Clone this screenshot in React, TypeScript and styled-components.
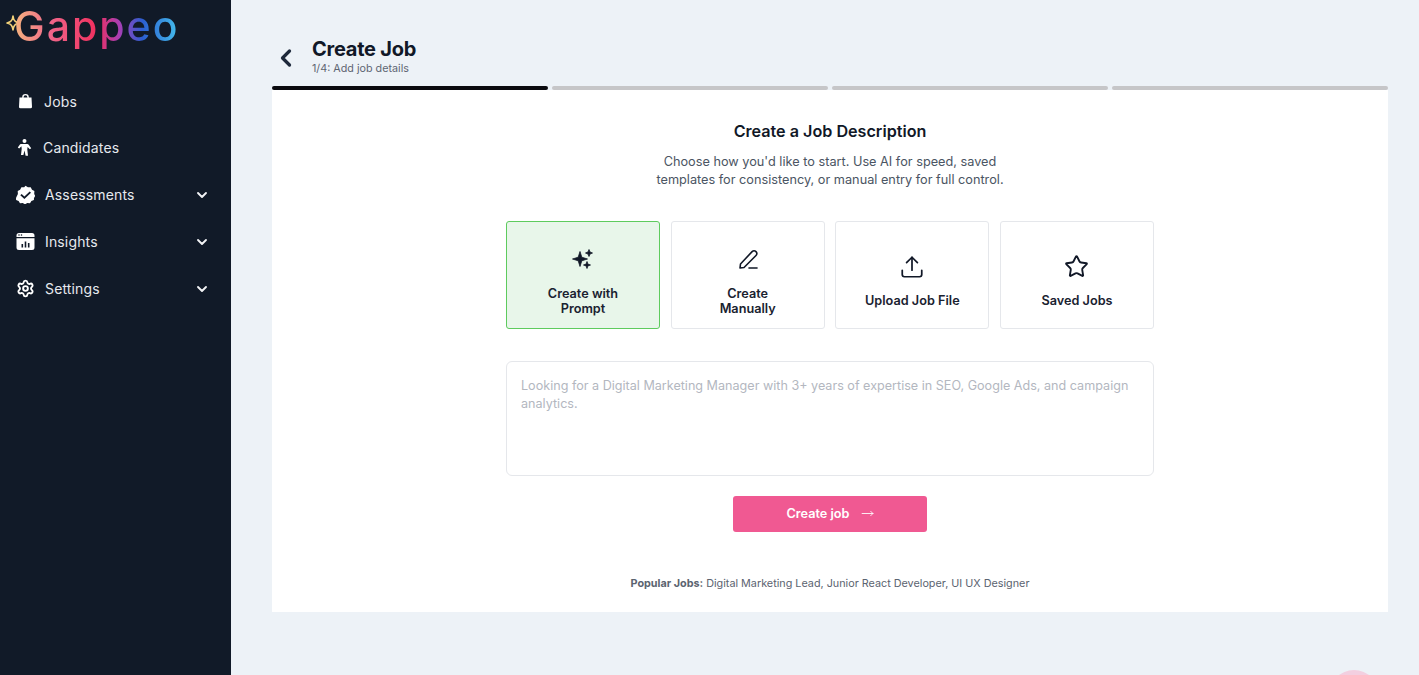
import React from "react";
import styled, { createGlobalStyle } from "styled-components";
import { ChevronDown, ChevronLeft, Settings, Upload, Star, MoveRight } from "lucide-react";

const Global = createGlobalStyle`
  html, body { margin: 0; padding: 0; height: 100%; overflow: hidden; }
  body { font-family: Inter, "Liberation Sans", sans-serif; background: #edf2f7; }
  * { box-sizing: border-box; }
`;

const Page = styled.div`
  display: flex;
  height: 675px;
  position: relative;
  overflow: hidden;
`;
const Sidebar = styled.aside`
  width: 231px;
  flex: none;
  background: #111a28;
  display: flex;
  flex-direction: column;
`;
const LogoRow = styled.div`
  height: 77px;
  padding: 3px 0 0 6px;
  display: flex;
  align-items: flex-start;
`;
const LogoStar = styled.svg`
  flex: none;
  width: 14px;
  height: 16px;
  margin-top: 12px;
`;
const LogoText = styled.span`
  font-family: Inter, sans-serif;
  font-size: 41px;
  line-height: 46px;
  font-weight: 500;
  letter-spacing: 2px;
  margin-left: -6px;
  background: linear-gradient(90deg, #f5b57e 0%, #f0668a 22%, #f0305f 50%, #a63fb5 64%, #2b5fd0 78%, #45c0ee 100%);
  -webkit-background-clip: text;
  background-clip: text;
  color: transparent;
`;
const Nav = styled.nav`
  display: flex;
  flex-direction: column;
`;
const NavRow = styled.div`
  height: 47px;
  display: flex;
  align-items: center;
  padding: 0 21px 0 16px;
  color: #e6e9ee;
  font-size: 14px;
  &:first-child { padding-top: 2px; }
`;
const NavIcon = styled.svg<{ $gap: number }>`
  width: 19px;
  height: 19px;
  flex: none;
  margin-right: ${(p) => p.$gap}px;
  fill: #fff;
`;
const GearIcon = styled(Settings)`
  flex: none;
  margin: 0 10px 0 0;
`;
const NavLabel = styled.span`
  flex: 1;
  letter-spacing: 0.15px;
`;
const Main = styled.main`
  flex: 1;
  padding: 36px 31px 0 41px;
  display: flex;
  flex-direction: column;
`;
const Header = styled.header`
  height: 50px;
  display: flex;
  align-items: flex-start;
  color: #111827;
`;
const Back = styled.div`
  width: 40px;
  height: 42px;
  display: flex;
  align-items: center;
  color: #1e293b;
  padding-top: 1px;
`;
const Titles = styled.div`
  display: flex;
  flex-direction: column;
`;
const Title = styled.h1`
  margin: 0;
  font-size: 20px;
  line-height: 26px;
  font-weight: 700;
  letter-spacing: -0.25px;
  color: #111827;
`;
const Sub = styled.div`
  font-size: 10.75px;
  line-height: 14px;
  color: #5f6673;
`;
const Progress = styled.div`
  display: grid;
  grid-template-columns: repeat(4, 1fr);
  gap: 4px;
  height: 4px;
`;
const Step = styled.div<{ $on?: boolean }>`
  background: ${(p) => (p.$on ? "#0b0b0f" : "#c6c6c8")};
  border-radius: 2px;
`;
const Panel = styled.section`
  height: 522px;
  background: #fff;
  display: flex;
  flex-direction: column;
  align-items: center;
  padding-top: 31px;
`;
const Heading = styled.h2`
  margin: 0;
  font-size: 16.15px;
  line-height: 20px;
  font-weight: 600;
  color: #111827;
`;
const Desc = styled.p`
  margin: 12px 0 0;
  font-size: 12.73px;
  line-height: 18px;
  color: #4b5563;
  text-align: center;
  width: 380px;
`;
const Cards = styled.div`
  margin-top: 32px;
  width: 648px;
  display: grid;
  grid-template-columns: repeat(4, 1fr);
  gap: 10.67px;
`;
const Card = styled.div<{ $active?: boolean }>`
  height: 108px;
  padding-top: 13px;
  border-radius: 3px;
  border: 1px solid ${(p) => (p.$active ? "#5ecb5e" : "#e5e7eb")};
  background: ${(p) => (p.$active ? "#e8f6ea" : "#fff")};
  display: flex;
  flex-direction: column;
  align-items: center;
  justify-content: center;
  color: #111827;
`;
const CardLabel = styled.div<{ $wide?: boolean }>`
  margin-top: ${(p) => (p.$wide ? 14 : 15)}px;
  width: ${(p) => (p.$wide ? 130 : 90)}px;
  font-size: 12.7px;
  line-height: 15px;
  font-weight: 600;
  text-align: center;
  color: #1a2230;
`;
const Prompt = styled.div`
  margin-top: 32px;
  width: 648px;
  height: 115px;
  border: 1px solid #e5e7eb;
  border-radius: 6px;
  padding: 15px 14px;
  font-size: 12.6px;
  line-height: 18px;
  color: #b3b7bf;
`;
const Button = styled.div`
  margin-top: 20px;
  width: 194px;
  height: 36px;
  border-radius: 3px;
  background: #f05992;
  color: #fff;
  font-size: 12.7px;
  font-weight: 600;
  display: flex;
  align-items: center;
  justify-content: center;
  gap: 11px;
  padding-bottom: 1px;
`;
const Popular = styled.div`
  margin-top: 45px;
  font-size: 10.8px;
  line-height: 14px;
  color: #5b6370;
  & b { font-weight: 700; }
`;
const Blob = styled.div`
  position: absolute;
  left: 1329px;
  top: 670px;
  width: 50px;
  height: 50px;
  border-radius: 50%;
  background: #f3cfe0;
`;

const Chevron = () => <ChevronDown size={16} strokeWidth={2.8} color="#f3f4f6" />;

export default function App() {
  return (
    <Page>
      <Global />
      <Sidebar>
        <LogoRow>
          <LogoStar viewBox="0 0 14 16" aria-hidden>
            <path d="M7 1 C7.600 5.500 8.800 7 13 8 C8.800 9 7.600 10.500 7 15 C6.400 10.500 5.200 9 1 8 C5.200 7 6.400 5.500 7 1Z" fill="#111a28" stroke="#f2d27a" strokeWidth="1.6" strokeLinejoin="round" />
          </LogoStar>
          <LogoText>Gappeo</LogoText>
        </LogoRow>
        <Nav>
          <NavRow>
            <NavIcon $gap={9} viewBox="0 0 19 19">
              <path d="M3.500 5.500h2.700V5.200a3.300 3.300 0 0 1 6.600 0v.3h2.700l.5 9.200a1.500 1.500 0 0 1-1.500 1.600H4.500A1.500 1.500 0 0 1 3 14.700ZM7.600 5.500h3.800v-.3a1.900 1.900 0 0 0-3.800 0Z" fillRule="evenodd" />
            </NavIcon>
            <NavLabel>Jobs</NavLabel>
          </NavRow>
          <NavRow>
            <NavIcon $gap={8} viewBox="0 0 19 19">
              <circle cx="8.500" cy="3" r="2" />
              <path d="M5.800 6h5.400c.7 0 1.300.3 1.700.9l2.300 3.300-1.400 1-2.200-2.300-.3 2.600.7 6.200H9.600L8.500 12.500 7.400 17H5l.7-6.200-.3-2.600-2.200 2.300-1.400-1 2.300-3.300C4.500 6.300 5.100 6 5.800 6Z" />
            </NavIcon>
            <NavLabel>Candidates</NavLabel>
          </NavRow>
          <NavRow>
            <NavIcon $gap={10} viewBox="0 0 19 19">
              <path fillRule="evenodd" d="M9.500.8l2.400 1.500 2.800-.1 1.300 2.500 2.400 1.400-.2 2.900 1 2-1.200 2-.1 2.100-2.500 1-1.400 2.100-2.700-.2-2.300 1.300-2.300-1.300-2.700.2-1.400-2.100-2.500-1-.1-2.100L.9 11l1-2-.2-2.900 2.400-1.400 1.300-2.500 2.800.1ZM13.700 6.400 8.400 11.400 5.600 8.900 4.300 10.300l4.100 3.700 6.600-6.200Z" />
            </NavIcon>
            <NavLabel>Assessments</NavLabel>
            <Chevron />
          </NavRow>
          <NavRow>
            <NavIcon $gap={10} viewBox="0 0 19 19">
              <path fillRule="evenodd" d="M3 1h13a2.500 2.500 0 0 1 2.500 2.500V5H.5V3.500A2.500 2.500 0 0 1 3 1ZM3 2.200a.8.8 0 1 0 0 1.600.8.8 0 0 0 0-1.600ZM5.500 2.200a.8.8 0 1 0 0 1.600.8.8 0 0 0 0-1.600ZM.5 6.200h18v9.300a2.500 2.500 0 0 1-2.500 2.500H3a2.500 2.500 0 0 1-2.500-2.500ZM5.500 12v3.500h1.600V12ZM8.700 9.500v6h1.600v-6ZM11.900 11v4.500h1.600V11Z" />
            </NavIcon>
            <NavLabel>Insights</NavLabel>
            <Chevron />
          </NavRow>
          <NavRow>
            <GearIcon size={19} strokeWidth={2.4} color="#fff" />
            <NavLabel>Settings</NavLabel>
            <Chevron />
          </NavRow>
        </Nav>
      </Sidebar>
      <Main>
        <Header>
          <Back>
            <ChevronLeft size={28} strokeWidth={2.8} />
          </Back>
          <Titles>
            <Title>Create Job</Title>
            <Sub>1/4: Add job details</Sub>
          </Titles>
        </Header>
        <Progress>
          <Step $on />
          <Step />
          <Step />
          <Step />
        </Progress>
        <Panel>
          <Heading>Create a Job Description</Heading>
          <Desc>
            Choose how you'd like to start. Use AI for speed, saved templates for consistency, or manual entry for full control.
          </Desc>
          <Cards>
            <Card $active>
              <svg width="24" height="24" viewBox="0 0 24 24" fill="#111827" stroke="#111827" strokeWidth="0.8" strokeLinejoin="round" aria-hidden>
                <path d="M9 4.500 L10.800 10.200 L16.500 12 L10.800 13.800 L9 19.500 L7.200 13.800 L1.500 12 L7.200 10.200Z" />
                <path d="M18 2.500 L19 5 L21.500 6 L19 7 L18 9.500 L17 7 L14.500 6 L17 5Z" />
                <path d="M16 14.500 L16.900 17.100 L19.500 18 L16.900 18.900 L16 21.500 L15.100 18.900 L12.500 18 L15.100 17.100Z" />
              </svg>
              <CardLabel>Create with Prompt</CardLabel>
            </Card>
            <Card>
              <svg width="24" height="24" viewBox="0 0 24 24" fill="none" stroke="#111827" strokeWidth="1.6" strokeLinecap="round" strokeLinejoin="round" aria-hidden>
                <path d="M4.500 17 L4 21 L8 20.500 L20 8.500 C21.200 7.300 21.200 5.800 20 4.600 C18.800 3.400 17.300 3.400 16.100 4.600 Z" />
                <path d="M13 21 H21" />
              </svg>
              <CardLabel>Create Manually</CardLabel>
            </Card>
            <Card>
              <Upload size={26} strokeWidth={1.6} color="#111827" style={{ margin: "-1px 0" }} />
              <CardLabel $wide>Upload Job File</CardLabel>
            </Card>
            <Card>
              <Star size={25} strokeWidth={1.8} color="#111827" style={{ margin: "-1px 0 0" }} />
              <CardLabel $wide>Saved Jobs</CardLabel>
            </Card>
          </Cards>
          <Prompt>
            Looking for a Digital Marketing Manager with 3+ years of expertise in SEO, Google Ads, and campaign analytics.
          </Prompt>
          <Button>
            Create job
            <MoveRight size={13} strokeWidth={1.6} />
          </Button>
          <Popular>
            <b>Popular Jobs:</b> Digital Marketing Lead, Junior React Developer, UI UX Designer
          </Popular>
        </Panel>
      </Main>
      <Blob />
    </Page>
  );
}
